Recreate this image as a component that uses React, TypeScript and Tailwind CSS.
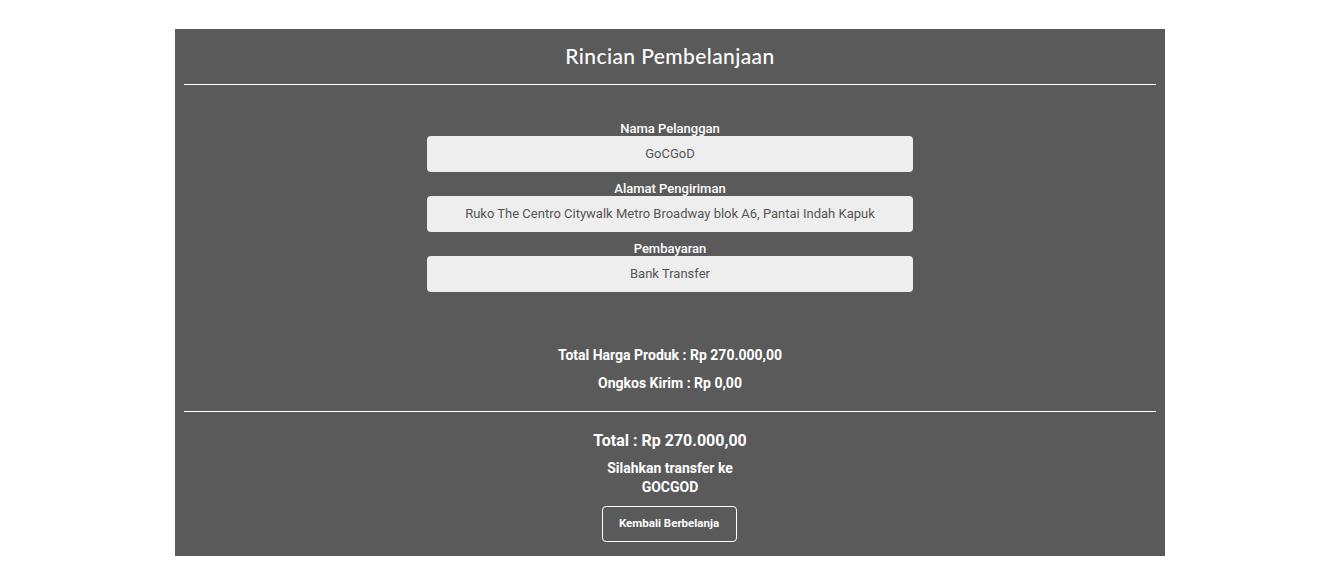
import React from "react";

const fields = [
  { label: "Nama Pelanggan", value: "GoCGoD" },
  { label: "Alamat Pengiriman", value: "Ruko The Centro Citywalk Metro Broadway blok A6, Pantai Indah Kapuk" },
  { label: "Pembayaran", value: "Bank Transfer" },
];

export default function App() {
  return (
    <div className="min-h-screen bg-white pt-[29px] pr-[1px]">
      <div className="mx-auto w-[990px] bg-[#5a5a5a] px-[9px] pb-[14px] text-white">
        <h1 className="h-[55px] pt-[13px] text-center text-[21px] leading-[28px] font-['Lato',sans-serif] font-medium tracking-[0.4px]">
          Rincian Pembelanjaan
        </h1>
        <hr className="border-0 border-t border-white" />

        {/* data pelanggan */}
        <div className="mx-auto w-[486px] pt-[36px] font-['Roboto',sans-serif]">
          {fields.map((f) => (
            <div key={f.label} className="mb-[9px] text-center">
              <label className="block text-[13px] leading-[15px] font-medium">{f.label}</label>
              <div className="flex h-[36px] items-center justify-center rounded-[4px] bg-[#eeeeee] text-[13px] text-[#555555]">
                {f.value}
              </div>
            </div>
          ))}
        </div>

        <div className="pt-[40px] text-center font-['Roboto',sans-serif] font-bold">
          <p className="text-[14px] leading-[28px]">Total Harga Produk : Rp 270.000,00</p>
          <p className="text-[14px] leading-[28px]">Ongkos Kirim : Rp 0,00</p>
        </div>

        <hr className="mt-[14px] border-0 border-t border-white" />

        <div className="pt-[16px] text-center font-['Roboto',sans-serif] font-bold">
          <p className="text-[16px] leading-[26px]">Total : Rp 270.000,00</p>
          <p className="mt-[5px] text-[14px] leading-[19px]">Silahkan transfer ke</p>
          <p className="text-[14px] leading-[19px]">GOCGOD</p>
          <button className="mt-[9px] mr-[2px] h-[36px] w-[135px] rounded-[4px] border border-white text-[11.5px] font-bold">
            Kembali Berbelanja
          </button>
        </div>
      </div>
    </div>
  );
}
